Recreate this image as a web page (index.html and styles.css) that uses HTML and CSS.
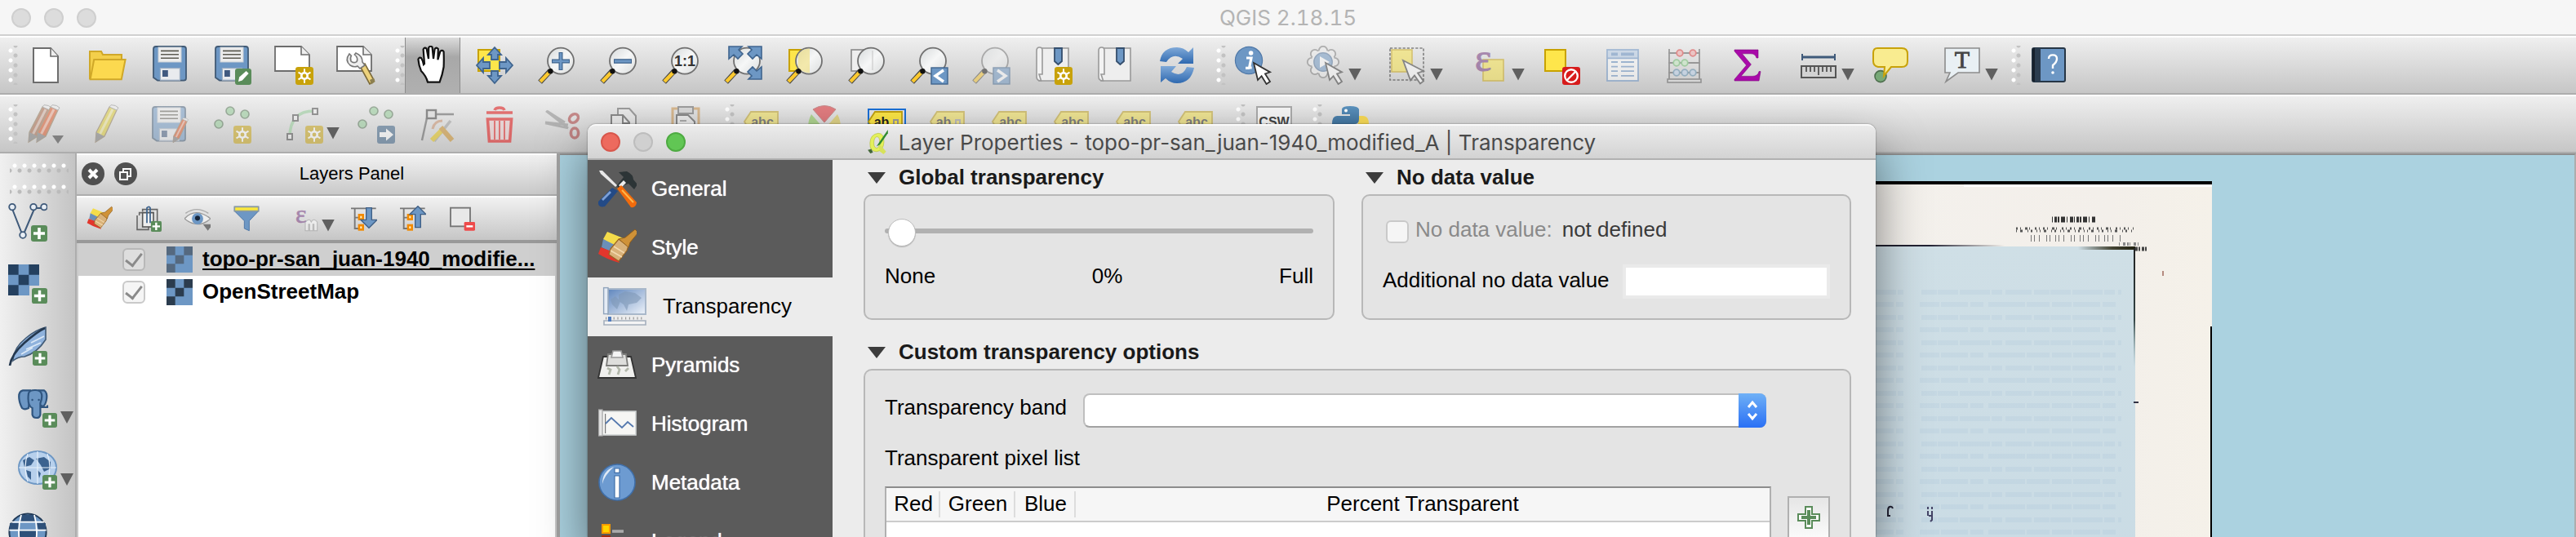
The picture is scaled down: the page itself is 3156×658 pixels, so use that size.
FILE: index.html
```html
<!DOCTYPE html>
<html lang="en">
<head>
<meta charset="utf-8">
<title>QGIS 2.18.15</title>
<link rel="stylesheet" href="styles.css">
</head>
<body>
<svg class="sprite" aria-hidden="true">
  <defs>
    <linearGradient id="g-glass" x1="0" y1="0" x2="1" y2="1"><stop offset="0" stop-color="#d5d9da"/><stop offset=".5" stop-color="#f6f7f7"/><stop offset="1" stop-color="#dadcdc"/></linearGradient>
    <linearGradient id="g-refresh" x1="0" y1="0" x2="0" y2="1"><stop offset="0" stop-color="#7fa9d8"/><stop offset="1" stop-color="#2f69b0"/></linearGradient>
    <linearGradient id="g-sea" x1="0" y1="0" x2="1" y2="1"><stop offset="0" stop-color="#5f86bd"/><stop offset="1" stop-color="#eef3fa"/></linearGradient>
    <linearGradient id="g-py" x1="0" y1="0" x2="0" y2="1"><stop offset="0" stop-color="#5c93bf"/><stop offset="1" stop-color="#356690"/></linearGradient>
  </defs>
  <symbol id="b-new" viewBox="0 0 10 10"><rect width="10" height="10" rx="1.5" fill="#c8a20a"/><path d="M5 1v8M1.6 3l6.8 4M8.4 3L1.6 7" stroke="#fff" stroke-width=".9"/><circle cx="5" cy="5" r="2.3" fill="#fff"/><circle cx="5" cy="5" r="1.1" fill="#c8a20a"/></symbol>
  <symbol id="b-plus" viewBox="0 0 10 10"><rect width="10" height="10" rx="1.5" fill="#5a8c5a"/><path d="M5 1.5v7M1.5 5h7" stroke="#fff" stroke-width="1.8"/></symbol>
  <symbol id="i-new" viewBox="0 0 24 24"><path d="M4.5 1.5h10.500l4.500 5v16H4.500z" fill="#fff" stroke="#6d6d6d"/><path d="M15 1.500v5h4.500" fill="#eee" stroke="#6d6d6d" stroke-width=".8"/></symbol>
  <symbol id="i-open" viewBox="0 0 24 24"><path d="M1 20.500V3.500h7l1 2h11.500V10" fill="#f3cf4b" stroke="#d0a828"/><path d="M1.300 20.600L3.600 8.500h19.200L20.400 20.600z" fill="#fcd94f" stroke="#d0a828"/></symbol>
  <symbol id="i-save" viewBox="0 0 24 24"><path d="M3.500.5h17q1.500 0 1.500 1.500v18q0 1.300-1.500 1.300h-16L2 19.500V2Q2 .5 3.500.5z" fill="#6d97c4" stroke="#415a75" stroke-width=".9"/><rect x="5" y="1" width="14" height="9" fill="#ededed" stroke="#c9cfd5" stroke-width=".5"/><path d="M6.500 3.200h11M6.500 5.400h11M6.500 7.600h11" stroke="#5c5b52" stroke-width=".8"/><rect x="6.200" y="13.800" width="12" height="7.300" fill="#e9ebee" stroke="#9fb0c4" stroke-width=".6"/><rect x="7.500" y="15" width="3.400" height="4" fill="#415a80"/></symbol>
  <symbol id="i-saveas" viewBox="0 0 24 24"><use href="#i-save"/><rect x="14" y="14" width="10" height="10" rx="1.500" fill="#5a8c5a"/><path d="M16 22l.6-2.700 4.200-3.800 1.500 1.500-3.900 4.200z" fill="#fff"/></symbol>
  <symbol id="i-comp" viewBox="0 0 24 24"><path d="M.5.500h16l5 5v10H.5z" fill="#fff" stroke="#6d6d6d" stroke-width=".9"/><path d="M16.500.5v5h5" fill="#eee" stroke="#6d6d6d" stroke-width=".8"/></symbol>
  <symbol id="i-compnew" viewBox="0 0 24 24"><use href="#i-comp"/><use href="#b-new" x="13" y="13" width="11" height="11"/></symbol>
  <symbol id="i-compman" viewBox="0 0 24 24"><use href="#i-comp"/><path d="M14.500 12.500l3-1.500 5.500 10-2.500 2.500z" fill="#edd27c" stroke="#7b6a3a" stroke-width=".8"/><path d="M20.500 21l2.500-1.300.8 2.300-2.300 1.700z" fill="#8d8050"/><path d="M8 5q-3 4 .5 7 2.500 1.500 4.500.5l1.500 1.500 3-2-1.500-2q0-4-4-5.500l-.8 1q2.500 2 1.300 4.300-2 1.200-3.500-.3-.7-2 .2-3.300z" fill="#eee" stroke="#777" stroke-width=".8"/></symbol>
  <symbol id="i-pan" viewBox="0 0 24 24"><path d="M9 22.300Q8 18.500 5 15.500 3.500 12 3.200 8.300q.6-1.500 1.800-.8Q6 9 6.500 11.500L7 11Q6.600 6 6.300 2.200q.8-1.600 2-.4L9.500 8 9.600 1.200q1-1.500 2.200-.3L12.500 8l.8-6q1-1.300 2.100 0L15.200 8.600l1.500-5.200q1.300-1 2.100.3Q19 9 18.800 13 18 18 16.300 22.300z" fill="#fff" stroke="#111" stroke-width="1.100"/></symbol>
  <symbol id="i-pansel" viewBox="0 0 24 24"><rect x="2" y="2.500" width="13" height="13" fill="#fee64b" stroke="#c8a200"/><path d="M12 1l4 4.500h-2V8.500h-4V5.500H8zM12 23l4-4.500h-2v-3h-4v3H8zM1 12l4-4.500v2.500h4v4H5v2.500zM23 12l-4-4.500v2.500h-4v4h4v2.500z" fill="#6d97c4" stroke="#3f648e" stroke-width=".9"/></symbol>
  <symbol id="i-lens" viewBox="0 0 24 24"><path d="M8 15.500L1.800 22.300" stroke="#444" stroke-width="3.200"/><path d="M7.500 16.200L2 22" stroke="#fcc92f" stroke-width="2.200"/><circle cx="14.500" cy="9.300" r="8" fill="url(#g-glass)" stroke="#707070" stroke-width=".9"/><circle cx="8.200" cy="15.600" r="1.600" fill="#111"/></symbol>
  <symbol id="i-zin" viewBox="0 0 24 24"><use href="#i-lens"/><path d="M14.500 4v11M9 9.500h11" stroke="#3f648e" stroke-width="2.500"/><path d="M14.500 4.500v10M9.500 9.500h10" stroke="#6d97c4" stroke-width="1.300"/></symbol>
  <symbol id="i-zout" viewBox="0 0 24 24"><use href="#i-lens"/><path d="M9 9.500h11" stroke="#3f648e" stroke-width="2.800"/><path d="M9.500 9.500h10" stroke="#6d97c4" stroke-width="1.500"/></symbol>
  <symbol id="i-zfull" viewBox="0 0 24 24"><use href="#i-lens"/><path d="M3.500.5h8l-2 2 2.500 2.500-3 3-2.500-2.500-3 2.500zM23.500.5h-8l2 2-2.500 2.500 3 3 2.500-2.500 3 2.500zM23.500 20.500h-8l2-2-2.500-2.500 3-3 2.500 2.500 3-2.500z" fill="#6d97c4" stroke="#3f648e" stroke-width=".8"/></symbol>
  <symbol id="i-zsel" viewBox="0 0 24 24"><rect x="2.500" y="2.500" width="12" height="13" fill="#fee64b" stroke="#c8a200"/><use href="#i-lens"/><path d="M8 5q3-3.500 7-3.300V16.700Q10 16.500 7.800 13z" fill="#f2e07a" opacity=".6"/></symbol>
  <symbol id="i-zlay" viewBox="0 0 24 24"><rect x="2.500" y="2.500" width="12" height="13" fill="#eee" stroke="#888" stroke-width=".8"/><use href="#i-lens"/><path d="M15.500 3v12" stroke="#ccc" stroke-width=".6"/></symbol>
  <symbol id="i-zlast" viewBox="0 0 24 24"><use href="#i-lens"/><rect x="13.500" y="13.500" width="10" height="10" fill="#6d97c4" stroke="#3f648e" stroke-width=".7"/><path d="M21 15l-5 3.500 5 3.500" fill="none" stroke="#fff" stroke-width="1.700"/></symbol>
  <symbol id="i-znext" viewBox="0 0 24 24"><use href="#i-lens"/><rect x="13.500" y="13.500" width="10" height="10" fill="#6d97c4" stroke="#3f648e" stroke-width=".7"/><path d="M16 15l5 3.500-5 3.500" fill="none" stroke="#fff" stroke-width="1.700"/></symbol>
  <symbol id="i-book" viewBox="0 0 24 24"><path d="M5 1.500h16.500v20H3.500V17.500" fill="#eeeeee" stroke="#999" stroke-width=".8"/><path d="M2 3q0-2 1.800-2T5.500 3v14.500H3.500l1.300 4Q2 21.500 2 19z" fill="#f3f3f3" stroke="#999" stroke-width=".8"/><path d="M13 1.500h4.500v8L15.200 11.500 13 9.500z" fill="#6d97c4" stroke="#344e6d" stroke-width=".9"/></symbol>
  <symbol id="i-booknew" viewBox="0 0 24 24"><use href="#i-book"/><use href="#b-new" x="13" y="13" width="11" height="11"/></symbol>
  <symbol id="i-refresh" viewBox="0 0 24 24"><path d="M1.500 9.500Q3 1 12 1q4 0 7 3l3-3v10h-9.500l3-3Q9.500 4 5.500 10z" fill="url(#g-refresh)"/><path d="M22.500 13.500Q20.500 23 12 23q-4 0-7-3l-3 2.500V12.500h9.500l-3 3.500Q15 20 18 13z" fill="url(#g-refresh)"/></symbol>
  <symbol id="cursor" viewBox="0 0 24 24"><path d="M12 10.500l10 5.700-3 1 3 4.800-2.200 1.500-3-4.900-2.300 2.400z" fill="#fff" stroke="#333" stroke-width=".9"/></symbol>
  <symbol id="i-ident" viewBox="0 0 24 24"><circle cx="9" cy="9" r="8.300" fill="#6d97c4" stroke="#4f78a8" stroke-width=".6"/><circle cx="10.300" cy="4.500" r="1.400" fill="#fff"/><path d="M7.500 7.500h3l-1.200 6h1.500M7 13.700h2.500" stroke="#fff" stroke-width="1.600" fill="none"/><use href="#cursor"/></symbol>
  <symbol id="i-action" viewBox="0 0 24 24"><g fill="#eee" stroke="#777" stroke-width=".9"><circle cx="10.500" cy="3" r="2.600"/><circle cx="15.500" cy="5" r="2.600"/><circle cx="17.500" cy="10" r="2.600"/><circle cx="15.500" cy="15" r="2.600"/><circle cx="10.500" cy="17" r="2.600"/><circle cx="5.500" cy="15" r="2.600"/><circle cx="3.500" cy="10" r="2.600"/><circle cx="5.500" cy="5" r="2.600"/></g><circle cx="10.500" cy="10" r="7.200" fill="#eee"/><circle cx="10.500" cy="10" r="5.600" fill="#6d97c4" stroke="#4b6e99" stroke-width=".7"/><path d="M8.500 6.500l6 3.500-6 3.500z" fill="#fff"/><use href="#cursor"/></symbol>
  <symbol id="i-select" viewBox="0 0 24 24"><rect x="1.500" y="1.500" width="20.500" height="19.500" fill="none" stroke="#222" stroke-width=".8" stroke-dasharray="1.600 1"/><rect x="2.500" y="2.500" width="12.500" height="13.500" fill="#fae445" stroke="#c8a200" stroke-width=".8"/><path d="M9.500 9l12.500 6.500-3.500 1.200 3.500 5-2 1.500-3.500-5-2.500 3z" fill="#fff" stroke="#333" stroke-width=".9"/></symbol>
  <symbol id="i-expr" viewBox="0 0 24 24"><rect x="8.500" y="8.500" width="12.500" height="13" fill="#fae445" stroke="#c8a200" stroke-width=".8"/></symbol>
  <symbol id="i-desel" viewBox="0 0 24 24"><rect x="2.500" y="2.500" width="12.500" height="13" fill="#fee64b" stroke="#c8a200"/><rect x="13" y="13" width="11" height="11" rx="1.500" fill="#d71b1b"/><circle cx="18.500" cy="18.500" r="3.900" fill="none" stroke="#fff" stroke-width="1.200"/><path d="M16 21l5-5" stroke="#fff" stroke-width="1.200"/></symbol>
  <symbol id="i-table" viewBox="0 0 24 24"><rect x="2.500" y="2.500" width="19" height="19" fill="#fff" stroke="#5f8cc2" stroke-width=".9"/><rect x="3" y="3" width="18" height="5" fill="#b5cde8"/><path d="M2.500 7.700h19" stroke="#5f8cc2" stroke-width=".8"/><path d="M5 5.200h4M11 5.200h8" stroke="#5f8cc2" stroke-width="1.900"/><path d="M5 10h4M11 10h8M5 12.800h4M11 12.800h8M5 15.600h4M11 15.600h8M5 18.400h4M11 18.400h8" stroke="#5f8cc2" stroke-width=".9"/></symbol>
  <symbol id="i-abacus" viewBox="0 0 24 24"><path d="M2.500 2v18.500M21 2v18.500M2 4.500h19.500M2 10.500h19.500M2 16.500h19.500" stroke="#555" stroke-width=".9"/><rect x="1.500" y="20.500" width="20.500" height="2" fill="#ddd" stroke="#555" stroke-width=".8"/><g fill="#f3a8a8" stroke="#d33" stroke-width=".9"><circle cx="9" cy="4.500" r="1.900"/><circle cx="17" cy="4.500" r="1.900"/></g><g fill="#c5ecc0" stroke="#6b6" stroke-width=".9"><circle cx="7" cy="10.500" r="1.900"/><circle cx="12" cy="10.500" r="1.900"/></g><g fill="#b9d0ea" stroke="#58a" stroke-width=".9"><circle cx="7" cy="16.500" r="1.900"/><circle cx="12" cy="16.500" r="1.900"/><circle cx="17" cy="16.500" r="1.900"/></g></symbol>
  <symbol id="i-sigma" viewBox="0 0 24 24"><path d="M4.500 2.500H19v5h-1q-.7-2.600-3.500-2.600H9.200l5.500 6.600-6.200 7.200h7q3.500 0 4-2.900h1l-1 5.700h-15v-.9l7.300-8.600-7.300-8.600z" fill="#a90aa9" stroke="#7d067d" stroke-width=".3"/></symbol>
  <symbol id="i-ruler" viewBox="0 0 24 24"><path d="M2 7h20" stroke="#3f5a7a" stroke-width="1.600"/><path d="M2 5v4M22 5v4" stroke="#3f5a7a"/><rect x="1.500" y="12.500" width="21" height="7" fill="#d2d2d2" stroke="#555"/><path d="M4.500 13v3M7 13v3M9.500 13v3M12 13v5M14.500 13v3M17 13v3M19.500 13v3" stroke="#444" stroke-width=".8"/></symbol>
  <symbol id="i-tips" viewBox="0 0 24 24"><circle cx="6" cy="18.800" r="3.500" fill="#77a877" stroke="#4e6e4e" stroke-width=".8"/><path d="M4 1.500h15q3.500 0 3.500 3.500v4.500q0 3.500-3.500 3.500h-6.500L8 18.500l.5-5.500H4.500Q1.500 12.500 1.500 9.500V4.500q0-3 2.500-3z" fill="#f9ec90" stroke="#c8a20a"/></symbol>
  <symbol id="i-annot" viewBox="0 0 24 24"><path d="M1.500 1.500h21v15H9.500L2 22l2.500-5.500h-3z" fill="#e9f0f4" stroke="#8c8c8c" stroke-width=".8"/></symbol>
  <symbol id="i-help" viewBox="0 0 24 24"><rect x="2" y="1.500" width="20" height="20.500" rx="1" fill="#6d97c4" stroke="#263646"/><path d="M2 1.500h5V22H2z" fill="#2b3c4e"/><path d="M2 1.500h1.500V22H2z" fill="#17212c"/><path d="M12 8q0-2.300 2.500-2.300T17 8q0 2-2.500 4v2" fill="none" stroke="#fff" stroke-width="1.200"/><circle cx="14.500" cy="16.500" r=".9" fill="#fff"/></symbol>
  <symbol id="pencil" viewBox="0 0 24 24"><path d="M5 17L13 1.500q3.200-.5 4.500 2L10 19.500 4.500 23z" fill="currentColor" stroke="#8a7350" stroke-width=".6"/><path d="M7.300 18L15 3" stroke="#fff" stroke-opacity=".5" stroke-width="1.500"/><path d="M5 17l5 2.500L4.500 23z" fill="#777"/><path d="M13 1.500l1-1.200q3 0 4.500 1.700l-1 1.500z" fill="#eee" stroke="#888" stroke-width=".5"/></symbol>
  <symbol id="i-edits" viewBox="0 0 24 24"><use href="#pencil" x="-3" class="c-brown"/><use href="#pencil" x="2" class="c-red"/><path d="M16 19h7l-3.500 5z" fill="#333"/></symbol>
  <symbol id="i-edit" viewBox="0 0 24 24"><use href="#pencil" class="c-yellow"/></symbol>
  <symbol id="i-saveedit" viewBox="0 0 24 24"><use href="#i-save" x="-.5" y="1"/><use href="#pencil" x="11" y="8" width="16" height="16" class="c-red"/></symbol>
  <symbol id="dots" viewBox="0 0 24 24"><g fill="#8fcb93" stroke="#4e6e4e" stroke-width=".8"><circle cx="11" cy="4" r="2.500"/><circle cx="20" cy="6" r="2.500"/><circle cx="4" cy="12" r="2.500"/></g></symbol>
  <symbol id="i-addf" viewBox="0 0 24 24"><use href="#dots"/><use href="#b-new" x="13" y="13" width="11" height="11"/></symbol>
  <symbol id="i-movef" viewBox="0 0 24 24"><use href="#dots"/><rect x="13" y="13" width="11" height="11" rx="1.500" fill="#335a80"/><path d="M14.500 17h4v-2.200l4.500 3.700-4.500 3.700V20h-4z" fill="#fff"/></symbol>
  <symbol id="i-curve" viewBox="0 0 24 24"><path d="M3.500 20q0-16 15-16" fill="none" stroke="#8fcb93" stroke-width="1.800"/><g fill="#eee" stroke="#444"><rect x="2" y="18" width="3" height="3.500"/><rect x="5.500" y="6.500" width="3" height="3.500"/><rect x="17.500" y="2.500" width="3" height="3.500"/></g><use href="#b-new" x="13" y="13" width="11" height="11"/></symbol>
  <symbol id="i-node" viewBox="0 0 24 24"><path d="M6 6h16M6 6L2.500 22" stroke="#555" stroke-width="1.200"/><rect x="5.500" y="3.500" width="5.500" height="5" fill="#ddd" stroke="#333" stroke-width="1.200"/><path d="M10 22.500L20 10" stroke="#999" stroke-width="1.800"/><path d="M8.500 22l6-6" stroke="#e3c100" stroke-width="3"/><path d="M14 14l7 8" stroke="#c88718" stroke-width="3"/><path d="M9 15q1-5 6-5" fill="none" stroke="#c88b65" stroke-width="1.500"/></symbol>
  <symbol id="i-trash" viewBox="0 0 24 24"><path d="M4 5h16M9 3.500q.5-1.500 3-1.500t3 1.500" stroke="#e00000" stroke-width="1.800" fill="none"/><path d="M4.700 9h14.600l-1 13.500H5.700z" fill="#eecccc" stroke="#e00000" stroke-width="1.800"/><path d="M9 10v11.500M12 10v11.500M15 10v11.500" stroke="#e00000" stroke-width=".9"/></symbol>
  <symbol id="i-cut" viewBox="0 0 24 24"><path d="M2.500 4L16 14.500M2 11l14 1.500M3 4l11 7M2 11.500l14 3" stroke="#888" stroke-width="1.400"/><g fill="none" stroke="#a33" stroke-width="1.800"><ellipse cx="19.500" cy="8.500" rx="3" ry="2.300" transform="rotate(-40 19.500 8.500)"/><ellipse cx="20" cy="17.500" rx="2.300" ry="3"/></g></symbol>
  <symbol id="i-copy" viewBox="0 0 24 24"><path d="M8.500 2.500h7l4 4.500v9h-11z" fill="#eee" stroke="#555"/><path d="M4.500 6.500h7l4 4.500v11h-11z" fill="#f4f4f4" stroke="#333"/><path d="M11.500 6.500v5h4" fill="none" stroke="#333"/></symbol>
  <symbol id="i-paste" viewBox="0 0 24 24"><rect x="4" y="2.500" width="16" height="19" fill="#ddd" stroke="#c98a3a" stroke-width="1.500"/><rect x="7.500" y="1.500" width="9" height="4" fill="#ccc" stroke="#555"/><path d="M6.500 6.500h7l4 4v10h-11z" fill="#f4f4f4" stroke="#333"/><path d="M8.500 10h4M8.500 12.500h7" stroke="#777"/></symbol>
  <symbol id="tag" viewBox="0 0 24 24"><path d="M5 4.500h16.500v13H5L1 10.500z" fill="#fae445" stroke="#c0a010" stroke-width=".9"/></symbol>
  <symbol id="pin" viewBox="0 0 24 24"><path d="M16.500 13V9.500h2.500V13" fill="none" stroke="#999"/></symbol>
  <symbol id="frame" viewBox="0 0 24 24"><rect x="1" y="3" width="22.500" height="20" fill="none" stroke="#1a6fd6" stroke-width="1"/></symbol>
  <symbol id="i-pie" viewBox="0 0 24 24"><path d="M12 11L5 3q7-4.500 14 0z" fill="#e0171e" stroke="#a33" stroke-width=".5"/><path d="M4 6l7 8v8Q-2 18 4 6z" fill="#7fc842"/><path d="M20 6l-7 8v8Q26 18 20 6z" fill="#dcc531"/></symbol>
  <symbol id="i-csw" viewBox="0 0 24 24"><rect x="2" y="1.500" width="21" height="21" fill="#f6f6f6" stroke="#aaa"/></symbol>
  <symbol id="i-python" viewBox="0 0 24 24"><path d="M17 7h3q3.500 0 3.500 5T20 18h-3v4H9v-7h6q2.500-1 2-8z" fill="#f8da56"/><path d="M7 5V3q0-2 5-2t5.500 2v6q0 3-3 3H8.500Q6 12.500 6 17H4Q1 17 1 12t3-5h8V6H7z" fill="url(#g-py)"/><circle cx="9.500" cy="3.700" r="1" fill="#fff"/></symbol>

  <symbol id="s-vector" viewBox="0 0 24 24"><path d="M2.500 4L9 20.500 16 4M16 3.500h6" fill="none" stroke="#3f5a7a" stroke-width="1"/><g fill="#e8eef5" stroke="#3f5a7a" stroke-width=".9"><circle cx="2.500" cy="2.800" r="1.900"/><circle cx="9" cy="20" r="1.900"/><circle cx="15.500" cy="2.800" r="1.900"/><circle cx="22" cy="2.800" r="1.900"/></g><use href="#b-plus" x="14" y="14" width="10" height="10"/></symbol>
  <symbol id="checker" viewBox="0 0 6 6"><path d="M0 0h6v6H0z" fill="#6d97c4"/><path d="M0 0h2v2H0zM4 0h2v2H4zM2 2h2v2H2zM0 4h2v2H0z" fill="currentColor"/></symbol>
  <symbol id="s-raster" viewBox="0 0 24 24"><use href="#checker" width="19" height="19" class="c-navy"/><path d="M13 13h6v6h-6z" fill="#d8d8d8"/><use href="#b-plus" x="14.500" y="14.500" width="9.500" height="9.500"/></symbol>
  <symbol id="s-feather" viewBox="0 0 24 24"><path d="M3 20Q3.500 13 11 7 17 2 23 .500V8Q18 16 10 18.500 6 18.500 3 21z" fill="#8fb2dc" stroke="#415a75" stroke-width=".8"/><path d="M1 24Q2 17 10 10T22.500 1" fill="none" stroke="#24384f" stroke-width="1.300"/><path d="M8 17l7-4M11 14l9-4M14 10l8-4" stroke="#dbe8f6" stroke-width=".9"/><use href="#b-plus" x="15" y="15" width="9" height="9"/></symbol>
  <symbol id="s-eleph" viewBox="0 0 24 24"><g fill="#6d97c4" stroke="#2f557f" stroke-width="1.100"><path d="M13 1.200h3Q18 2.500 17.600 6T15.500 11l-3-1z"/><path d="M14 11.500h4v-1.200" fill="none"/><path d="M7.500 1.200H3Q.6 1.700.6 5T2.500 12q1.700 1.300 4 0z"/><path d="M6.500 3Q7 1 10.500 1T14.500 3.500 13.700 9v7q-.3 2-2.400 2T8.800 16v-4Q5.500 10.500 6.500 3z"/></g><circle cx="8.800" cy="7" r=".6" fill="#2f557f"/><circle cx="12.800" cy="7" r=".6" fill="#2f557f"/><use href="#b-plus" x="15" y="15" width="9" height="9"/></symbol>
  <symbol id="s-wms" viewBox="0 0 24 24"><ellipse cx="12" cy="10.500" rx="11.500" ry="10" fill="#b7d0ec" stroke="#6d97c4"/><path d="M3 6l4-2 3 2-2 3-4 1zM11 5l5-1 4 3v4l-4 2-2-4zM5 12l3 1v5l-2-2zM12 12l2 2-1 3z" fill="#3b628f"/><path d="M.5 10.500h23M6 2q-3 8 0 17M12 .5v20M18 2q3 8 0 17" stroke="#e7f0fa" stroke-width=".6" fill="none"/><use href="#b-plus" x="15" y="15" width="9" height="9"/></symbol>
  <symbol id="s-wcs" viewBox="0 0 24 24"><circle cx="12" cy="12" r="11.300" fill="#6d97c4" stroke="#223b58"/><path d="M1 6.500h6l-1 4H.8zM17.500 6.500H23v4h-4.500zM8 1.500h8l1 4H7.500zM7 11h10v5H7z" fill="#2e5079"/><path d="M2 5.800h20M.7 10.800h22.600M2 17h20M8 1.500q-3 10 0 21M16 1.500q3 10 0 21" stroke="#fff" stroke-width=".9" fill="none"/></symbol>

  <symbol id="i-brush" viewBox="0 0 24 24"><path d="M6 2.500l10 4-4 6L3.500 7z" fill="#f4dc4a"/><path d="M3.500 7l9 4.500-3 4-7-3.500z" fill="#6b8fb8"/><path d="M2 12l8 3 3.500 6.500Q6 19.500 .5 16z" fill="#e2362c"/><path d="M8 13l5-6 6 4-1 3-5 6.500-6-4z" fill="#d9b27a" stroke="#9b6520" stroke-width=".6"/><path d="M13 7l6 5 1-3 5-6-2-2-6 5z" fill="#cf9238" stroke="#8d5c1c" stroke-width=".5"/><path d="M8 14l7 4M10 11.500l6.500 4" stroke="#f3d9ae" stroke-width=".8"/></symbol>
  <symbol id="l-group" viewBox="0 0 24 24"><path d="M6.500 5.500V3.500H20V16M3.500 9V6.500H17M1.500 9v13H12V19" fill="none" stroke="#666" stroke-width="1.200"/><rect x="6.500" y="6.500" width="10" height="13" fill="#eee" stroke="#555" stroke-width="1.200"/><path d="M10.500 16V2q2-2 3 0v14" fill="none" stroke="#3f648e" stroke-width="1.300"/><use href="#b-plus" x="14" y="14" width="10" height="10"/></symbol>
  <symbol id="l-eye" viewBox="0 0 24 24"><path d="M0 12Q10 1 24 12 12 22 0 12z" fill="#eee" stroke="#999"/><path d="M1 7q10-7 21 0" stroke="#aaa" fill="none"/><circle cx="12" cy="12" r="5.200" fill="#6d97c4"/><circle cx="12" cy="11.500" r="2.300" fill="#16253a"/><path d="M17 17h9l-4.500 6z" fill="#777"/></symbol>
  <symbol id="l-filter" viewBox="0 0 24 24"><path d="M1 1h22v4l-8.500 9v9L10 21v-7L1 5z" fill="#6d97c4" stroke="#4b74a4" stroke-width=".7"/><path d="M1 1h22v4H1z" fill="#fbe83c" stroke="#8a9aa0" stroke-width="1.200"/></symbol>
  <symbol id="l-eps" viewBox="0 0 24 24"><path d="M12 23v-8q4-4 5.500 0 2-4 5.500 0v8h-3v-6h-1v6h-3v-6h-1v6z" fill="#fff" stroke="#999" stroke-width=".8"/></symbol>
  <symbol id="l-tree" viewBox="0 0 24 24"><path d="M0 2.500h23M3.500 2.500V21H10M3.500 11H8" fill="none" stroke="#777" stroke-width="1.400"/><g fill="#fff1c8" stroke="#f28a00" stroke-width="2"><rect x="7.500" y="8.500" width="3.500" height="4"/><rect x="7.500" y="18" width="3.500" height="4"/></g></symbol>
  <symbol id="l-expand" viewBox="0 0 24 24"><use href="#l-tree"/><path d="M14 2h5v11h5L16.500 20.500 9 13h5z" fill="#6d97c4" stroke="#3f5f86"/></symbol>
  <symbol id="l-collapse" viewBox="0 0 24 24"><use href="#l-tree"/><path d="M14 20h5V8h5L16.500.500 9 8h5z" fill="#6d97c4" stroke="#3f5f86"/></symbol>
  <symbol id="l-remove" viewBox="0 0 24 24"><rect x="1.500" y="2" width="18" height="17" fill="#e8e8e8" stroke="#777" stroke-width="1.400"/><rect x="14" y="15" width="10" height="8" rx="1" fill="#ee4b4b"/><path d="M16 19h6" stroke="#fff" stroke-width="1.800"/></symbol>

  <symbol id="p-general" viewBox="0 0 24 24"><path d="M1 1l2 0 9 9-1 1-9-8z" fill="#e8e8e8"/><path d="M12 10l4-5-3-3 5-.5q4 2 4 5l2.500 3-2 3L19 9l-3 1-3 3z" fill="#2c3436"/><path d="M13 10l3-3 1.500 1.500-3 3z" fill="#eee"/><path d="M9 11.500l3.500 2-8 9.500Q0 24 .5 20z" fill="#234a86"/><path d="M3 19l5-5" stroke="#7da0d6" stroke-width="1.400"/><path d="M12 12l2.500-2 9.500 10.500q-.5 3.500-3.500 3z" fill="#f26b0c"/><path d="M15 13l7 7.500" stroke="#ffb74a" stroke-width="1"/></symbol>
  <symbol id="p-transp" viewBox="0 0 27 24"><rect x="3.500" y="1.500" width="23" height="15.500" fill="url(#g-sea)" stroke="#a9b8ca"/><rect x=".8" y=".8" width="2.700" height="16" fill="#e5ecf5" stroke="#8fa3bb" stroke-width=".7"/><path d="M5 8l3-2 3 3-2 5-3-3zM10 5l4-2 6 1 4 3-3 3-5 1-1 4-2-4-3-2z" fill="#7f97b5" opacity=".6"/><path d="M1 21h25.500v2.500H1z" fill="#f4f4f4" stroke="#a5b0bd" stroke-width=".8"/><path d="M2 19.500h24" stroke="#999" stroke-width="1.500" stroke-dasharray=".6 1.800"/><path d="M3.500 18.500h2v3h-2z" fill="#4f7bbd"/></symbol>
  <symbol id="p-pyr" viewBox="0 0 24 24"><path d="M3.500 7h17l3 13H.5z" fill="#f0f0ee" stroke="#333" stroke-width=".9"/><path d="M6.500 5.500h11l1 7h-13z" fill="#dededc" stroke="#7c7c7a" stroke-width=".9"/><path d="M9.500 3.500h5l1 4H8.500z" fill="#f4f4f4" stroke="#999" stroke-width=".8"/><path d="M6 14l2 1-1 3M12 13l1.500 2-1 3M19 14l-2 2" stroke="#b3b8ab" stroke-width="1.400" fill="none"/></symbol>
  <symbol id="p-hist" viewBox="0 0 24 24"><rect x="3" y="4.500" width="20.500" height="14.500" fill="#f6f6f4" stroke="#cfd3d3" stroke-width=".8"/><rect x=".8" y="3.500" width="2.200" height="16" fill="#e5e5e5" stroke="#aaa" stroke-width=".6"/><path d="M4.800 6v12" stroke="#777" stroke-width=".6"/><path d="M5 12l3.500-3.500 6.500 6 3.500-3.500 3.500 3" fill="none" stroke="#5478ae" stroke-width=".9"/></symbol>
  <symbol id="p-meta" viewBox="0 0 24 24"><circle cx="12" cy="12" r="11" fill="#6d9bd1" stroke="#3f6ea8" stroke-width=".8"/><path d="M3 13Q3 5 10 2.500 4 8 3 13z" fill="#dfe9f5"/><path d="M10.500 3.500h3v2.700h-3zM10.500 8h3v13.500h-3z" fill="#fff" stroke="#3f6ea8" stroke-width=".6"/></symbol>
  <symbol id="p-legend" viewBox="0 0 24 24"><rect x="3" y="2" width="4.500" height="5" fill="#ffd400" stroke="#f59a00"/><path d="M9 6h7" stroke="#aaa" stroke-width="1.800"/><rect x="3" y="9" width="4.500" height="5" fill="#e05a30" stroke="#a02a10"/></symbol>
  <symbol id="q-logo" viewBox="0 0 24 28"><path d="M12 4Q3 5 2.500 15T10 25q8-1 8.500-11T12 4zm-1 4q3 1 2.500 7T10 21q-3.500-1-3-7t4-6z" fill="#e3f05a" fill-rule="evenodd" stroke="#aab82a" stroke-width=".5"/><path d="M12 18l3 0 6 7-3 3-4-3z" fill="#d7e25a"/><path d="M23 0L10 19l4-2 9-13z" fill="#2f8a2f"/><path d="M0 23l4-1 2 4-3 1z" fill="#44683a"/></symbol>
</svg>

<div class="app">
  <header class="titlebar">
    <div class="lights"><span class="light"></span><span class="light"></span><span class="light"></span></div>
    <h1 class="win-title">QGIS 2.18.15</h1>
  </header>

  <div class="toolbar" role="toolbar" aria-label="File and navigation">
    <span class="grip"></span>
    <button class="tb" aria-label="New project"><svg><use href="#i-new"/></svg></button>
    <button class="tb" aria-label="Open project"><svg><use href="#i-open"/></svg></button>
    <button class="tb" aria-label="Save project"><svg><use href="#i-save"/></svg></button>
    <button class="tb" aria-label="Save project as"><svg><use href="#i-saveas"/></svg></button>
    <button class="tb" aria-label="New print composer"><svg><use href="#i-compnew"/></svg></button>
    <button class="tb" aria-label="Composer manager"><svg><use href="#i-compman"/></svg></button>
    <span class="grip"></span>
    <button class="tb active" aria-label="Pan map" aria-pressed="true"><svg><use href="#i-pan"/></svg></button>
    <button class="tb" aria-label="Pan to selection"><svg><use href="#i-pansel"/></svg></button>
    <button class="tb" aria-label="Zoom in"><svg><use href="#i-zin"/></svg></button>
    <button class="tb" aria-label="Zoom out"><svg><use href="#i-zout"/></svg></button>
    <button class="tb" aria-label="Zoom to native resolution"><svg viewBox="0 0 24 24"><use href="#i-lens"/><text x="14.500" y="12.700" class="t-zoom">1:1</text></svg></button>
    <button class="tb" aria-label="Zoom full"><svg><use href="#i-zfull"/></svg></button>
    <button class="tb" aria-label="Zoom to selection"><svg><use href="#i-zsel"/></svg></button>
    <button class="tb" aria-label="Zoom to layer"><svg><use href="#i-zlay"/></svg></button>
    <button class="tb" aria-label="Zoom last"><svg><use href="#i-zlast"/></svg></button>
    <button class="tb" aria-label="Zoom next" disabled><svg><use href="#i-znext"/></svg></button>
    <button class="tb" aria-label="New bookmark"><svg><use href="#i-booknew"/></svg></button>
    <button class="tb" aria-label="Show bookmarks"><svg><use href="#i-book"/></svg></button>
    <button class="tb" aria-label="Refresh"><svg><use href="#i-refresh"/></svg></button>
    <span class="grip"></span>
    <button class="tb" aria-label="Identify features"><svg><use href="#i-ident"/></svg></button>
    <button class="tb menu dim" aria-label="Run feature action"><svg><use href="#i-action"/></svg><span class="arrow"></span></button>
    <button class="tb menu dim" aria-label="Select features"><svg><use href="#i-select"/></svg><span class="arrow"></span></button>
    <button class="tb menu dim" aria-label="Select by expression"><svg viewBox="0 0 24 24"><use href="#i-expr"/><text x="8.500" y="15.500" class="t-eps">ε</text></svg><span class="arrow"></span></button>
    <button class="tb" aria-label="Deselect all"><svg><use href="#i-desel"/></svg></button>
    <button class="tb" aria-label="Attribute table" disabled><svg><use href="#i-table"/></svg></button>
    <button class="tb" aria-label="Field calculator" disabled><svg><use href="#i-abacus"/></svg></button>
    <button class="tb" aria-label="Statistical summary"><svg><use href="#i-sigma"/></svg></button>
    <button class="tb menu" aria-label="Measure line"><svg><use href="#i-ruler"/></svg><span class="arrow"></span></button>
    <button class="tb" aria-label="Map tips"><svg><use href="#i-tips"/></svg></button>
    <button class="tb menu" aria-label="Text annotation"><svg viewBox="0 0 24 24"><use href="#i-annot"/><text x="12" y="13.600" class="t-annot">T</text></svg><span class="arrow"></span></button>
    <span class="grip"></span>
    <button class="tb" aria-label="Help"><svg><use href="#i-help"/></svg></button>
  </div>

  <div class="toolbar" role="toolbar" aria-label="Digitizing and labels">
    <span class="grip"></span>
    <button class="tb" aria-label="Current edits" disabled><svg><use href="#i-edits"/></svg></button>
    <button class="tb" aria-label="Toggle editing" disabled><svg><use href="#i-edit"/></svg></button>
    <button class="tb" aria-label="Save layer edits" disabled><svg><use href="#i-saveedit"/></svg></button>
    <button class="tb" aria-label="Add feature" disabled><svg><use href="#i-addf"/></svg></button>
    <button class="tb menu dim" aria-label="Add circular string"><svg><use href="#i-curve"/></svg><span class="arrow"></span></button>
    <button class="tb" aria-label="Move feature" disabled><svg><use href="#i-movef"/></svg></button>
    <button class="tb" aria-label="Node tool" disabled><svg><use href="#i-node"/></svg></button>
    <button class="tb" aria-label="Delete selected" disabled><svg><use href="#i-trash"/></svg></button>
    <button class="tb" aria-label="Cut features" disabled><svg><use href="#i-cut"/></svg></button>
    <button class="tb" aria-label="Copy features" disabled><svg><use href="#i-copy"/></svg></button>
    <button class="tb" aria-label="Paste features" disabled><svg><use href="#i-paste"/></svg></button>
    <span class="grip"></span>
    <button class="tb" aria-label="Labeling options" disabled><svg viewBox="0 0 24 24"><use href="#tag"/><text x="12" y="13.500" class="t-abc">abc</text></svg></button>
    <button class="tb" aria-label="Diagram options" disabled><svg><use href="#i-pie"/></svg></button>
    <button class="tb" aria-label="Highlight pinned labels"><svg viewBox="0 0 24 24"><use href="#frame"/><use href="#tag"/><text x="9" y="13.500" class="t-abc">ab</text><use href="#pin"/></svg></button>
    <button class="tb" aria-label="Pin labels" disabled><svg viewBox="0 0 24 24"><use href="#tag"/><text x="9" y="13.500" class="t-abc">ab</text><use href="#pin"/></svg></button>
    <button class="tb" aria-label="Show or hide labels" disabled><svg viewBox="0 0 24 24"><use href="#tag"/><text x="12" y="13.500" class="t-abc">abc</text></svg></button>
    <button class="tb" aria-label="Move label" disabled><svg viewBox="0 0 24 24"><use href="#tag"/><text x="12" y="13.500" class="t-abc">abc</text></svg></button>
    <button class="tb" aria-label="Rotate label" disabled><svg viewBox="0 0 24 24"><use href="#tag"/><text x="12" y="13.500" class="t-abc">abc</text></svg></button>
    <button class="tb" aria-label="Change label" disabled><svg viewBox="0 0 24 24"><use href="#tag"/><text x="12" y="13.500" class="t-abc">abc</text></svg></button>
    <span class="grip"></span>
    <button class="tb" aria-label="Metasearch"><svg viewBox="0 0 24 24"><use href="#i-csw"/><text x="12.500" y="13.500" class="t-csw">CSW</text></svg></button>
    <span class="grip"></span>
    <button class="tb" aria-label="Python console"><svg><use href="#i-python"/></svg></button>
  </div>

  <div class="workspace">
    <div class="side" role="toolbar" aria-label="Manage layers">
      <span class="grip-h"></span>
      <span class="grip-h"></span>
      <button class="sb" aria-label="Add vector layer"><svg><use href="#s-vector"/></svg></button>
      <button class="sb" aria-label="Add raster layer"><svg><use href="#s-raster"/></svg></button>
      <button class="sb" aria-label="Add SpatiaLite layer"><svg><use href="#s-feather"/></svg></button>
      <button class="sb menu" aria-label="Add PostGIS layer"><svg><use href="#s-eleph"/></svg><span class="arrow"></span></button>
      <button class="sb menu" aria-label="Add WMS layer"><svg><use href="#s-wms"/></svg><span class="arrow"></span></button>
      <button class="sb" aria-label="Add WCS layer"><svg><use href="#s-wcs"/></svg></button>
    </div>

    <section class="layers" aria-label="Layers Panel">
      <header class="layers-head">
        <button class="round" aria-label="Close panel"><svg viewBox="0 0 28 28"><path d="M9 9l10 10M19 9L9 19" stroke="#fff" stroke-width="4"/></svg></button>
        <button class="round" aria-label="Float panel"><svg viewBox="0 0 28 28"><rect x="11" y="8" width="9" height="9" fill="none" stroke="#fff" stroke-width="2"/><rect x="7" y="12" width="9" height="9" fill="#555" stroke="#fff" stroke-width="2"/></svg></button>
        <h2>Layers Panel</h2>
      </header>
      <div class="layers-tools" role="toolbar" aria-label="Layer tools">
        <button class="lb" aria-label="Open layer styling"><svg><use href="#i-brush"/></svg></button>
        <button class="lb" aria-label="Add group"><svg><use href="#l-group"/></svg></button>
        <button class="lb" aria-label="Manage visibility"><svg><use href="#l-eye"/></svg></button>
        <button class="lb" aria-label="Filter legend"><svg><use href="#l-filter"/></svg></button>
        <button class="lb menu dim" aria-label="Filter by expression"><svg viewBox="0 0 24 24"><use href="#l-eps"/><text x="8" y="16" class="t-eps">ε</text></svg><span class="arrow"></span></button>
        <button class="lb" aria-label="Expand all"><svg><use href="#l-expand"/></svg></button>
        <button class="lb" aria-label="Collapse all"><svg><use href="#l-collapse"/></svg></button>
        <button class="lb" aria-label="Remove layer"><svg><use href="#l-remove"/></svg></button>
      </div>
      <ul class="layer-list">
        <li class="layer selected"><input type="checkbox" class="check" id="ly1" checked><svg class="c-slate"><use href="#checker"/></svg><label for="ly1">topo-pr-san_juan-1940_modifie...</label></li>
        <li class="layer"><input type="checkbox" class="check" id="ly2" checked><svg class="c-ink"><use href="#checker"/></svg><label for="ly2">OpenStreetMap</label></li>
      </ul>
    </section>

    <main class="map">
      <svg class="map-canvas" role="img" aria-label="Map canvas">
        <defs>
          <pattern id="ghost" width="253" height="31" patternUnits="userSpaceOnUse" x="1666" y="160">
            <path d="M2 8h245" stroke="#9fbdd6" stroke-width="6" stroke-dasharray="19 1 25 2 37 2 13 4 32 3"/>
            <path d="M0 23h246" stroke="#9fbdd6" stroke-width="6" stroke-dasharray="24 2 33 3 16 6 45 2 28 3"/>
          </pattern>
          <linearGradient id="fade-r"><stop offset="0" stop-color="#111"/><stop offset=".75" stop-color="#223"/><stop offset="1" stop-color="#223" stop-opacity="0"/></linearGradient>
          <linearGradient id="fade-l"><stop offset="0" stop-color="#332" stop-opacity="0"/><stop offset=".6" stop-color="#443"/><stop offset="1" stop-color="#221"/></linearGradient>
          <linearGradient id="fade-d" x1="0" y1="0" x2="0" y2="1"><stop offset="0" stop-color="#222"/><stop offset=".6" stop-color="#344"/><stop offset="1" stop-color="#8aa" stop-opacity="0"/></linearGradient>
          <linearGradient id="paper"><stop offset="0" stop-color="#f4f2ee"/><stop offset=".8" stop-color="#f3efea"/><stop offset="1" stop-color="#f5f1e9"/></linearGradient>
          <linearGradient id="sea" x1="0" y1="0" x2="0" y2="1"><stop offset="0" stop-color="#cfdfe6"/><stop offset="1" stop-color="#c3d7e3"/></linearGradient>
        </defs>
        <rect x="1400" y="32" width="624" height="1000" fill="url(#paper)"/>
        <rect x="1400" y="32" width="624" height="4" fill="#000"/>
        <rect x="1720" y="36" width="304" height="3" fill="#fff"/>
        <rect x="2022" y="210" width="2" height="800" fill="#000"/>
        <rect x="1400" y="112" width="530" height="900" fill="url(#sea)"/>
        <rect x="1666" y="160" width="253" height="850" fill="url(#ghost)" opacity=".18"/>
        <rect x="1612" y="160" width="34" height="850" fill="url(#ghost)" opacity=".18"/>
        <rect x="1400" y="110" width="370" height="2" fill="url(#fade-r)"/>
        <rect x="1860" y="112" width="70" height="4" fill="url(#fade-l)"/>
        <path d="M1930 115h16" stroke="#444" stroke-width="5" stroke-dasharray="3 1 2 2"/>
        <rect x="1928" y="114" width="2" height="146" fill="url(#fade-d)"/>
        <rect x="1928" y="302" width="6" height="2" fill="#334"/>
        <g stroke="#555">
          <path d="M1828 79h54" stroke-width="7" stroke-dasharray="1 2 3 1 2 2 5 2 1 3 4 1" stroke="#333"/>
          <path d="M1784 90h144" stroke-width="3" stroke-dasharray="2 3 1 5 3 2 1 6 2 3 1 4"/>
          <path d="M1784 93h144" stroke-width="3" stroke-dasharray="1 4 3 6 1 3 2 5 1 3"/>
          <path d="M1802 102h112" stroke-width="8" stroke-dasharray="1 3 1 5 1 8 1 3 1 6" stroke="#777"/>
          <path d="M1910 109h24" stroke-width="4" stroke-dasharray="1 4 3 2 2 1" stroke="#888"/>
        </g>
        <path d="M1633 433q-1-3-4-2-2 1-2 5v6h3" fill="none" stroke="#223" stroke-width="2"/>
        <path d="M1676 431v3M1681 431v3M1676 436v6M1681 436v11l-2 2M1677 442h4" fill="none" stroke="#446" stroke-width="2"/>
        <rect x="1963" y="142" width="2" height="6" fill="#b58a80"/>
      </svg>
    </main>
  </div>
</div>

<section class="dialog" role="dialog" aria-labelledby="dlg-title">
  <header class="dlg-bar">
    <div class="lights"><button class="light red" aria-label="Close"></button><button class="light gray" aria-label="Minimize" disabled></button><button class="light green" aria-label="Zoom"></button></div>
    <div class="dlg-title"><svg><use href="#q-logo"/></svg><h2 id="dlg-title">Layer Properties - topo-pr-san_juan-1940_modified_A | Transparency</h2></div>
  </header>
  <div class="dlg-body">
    <nav class="pages" aria-label="Property pages">
      <button class="page"><svg><use href="#p-general"/></svg>General</button>
      <button class="page"><svg><use href="#i-brush"/></svg>Style</button>
      <button class="page current" aria-current="page"><svg><use href="#p-transp"/></svg>Transparency</button>
      <button class="page"><svg><use href="#p-pyr"/></svg>Pyramids</button>
      <button class="page"><svg><use href="#p-hist"/></svg>Histogram</button>
      <button class="page"><svg><use href="#p-meta"/></svg>Metadata</button>
      <button class="page"><svg><use href="#p-legend"/></svg>Legend</button>
    </nav>
    <div class="content">
      <section class="group">
        <h3><span class="tri"></span>Global transparency</h3>
        <div class="box">
          <input type="range" class="slider" min="0" max="100" value="0" aria-label="Global transparency">
          <div class="scale"><span>None</span><output>0%</output><span>Full</span></div>
        </div>
      </section>
      <section class="group">
        <h3><span class="tri"></span>No data value</h3>
        <div class="box">
          <div class="nodata"><input type="checkbox" class="check" id="nd" disabled><label for="nd">No data value:</label><span>not defined</span></div>
          <div class="extra"><label for="extra">Additional no data value</label><input type="text" id="extra"></div>
        </div>
      </section>
      <section class="group wide">
        <h3><span class="tri"></span>Custom transparency options</h3>
        <div class="box tall">
          <div class="band"><label for="band">Transparency band</label>
            <div class="combo"><select id="band"><option></option></select><span class="cap"><svg viewBox="0 0 34 42"><path d="M12 17l5-6 5 6M12 25l5 6 5-6" fill="none" stroke="#fff" stroke-width="3"/></svg></span></div>
          </div>
          <p class="caption" id="plist">Transparent pixel list</p>
          <div class="list-row">
            <table class="pixels" aria-labelledby="plist">
              <thead><tr><th class="w-red">Red</th><th class="w-green">Green</th><th class="w-blue">Blue</th><th>Percent Transparent</th></tr></thead>
              <tbody><tr><td colspan="4"></td></tr></tbody>
            </table>
            <button class="add" aria-label="Add values manually"><svg viewBox="0 0 30 28"><path d="M11 1h8v9h9v8h-9v9h-8v-9H2v-8h9z" fill="#fff" stroke="#5a8c5a" stroke-width="2"/><path d="M15 5v18M6 14h18" stroke="#5a8c5a" stroke-width="4"/></svg></button>
          </div>
        </div>
      </section>
    </div>
  </div>
</section>
</body>
</html>
```
FILE: styles.css
```css
* { box-sizing: border-box; }
body {
  margin: 0;
  height: 100vh;
  overflow: hidden;
  background: #abd2e0;
  font: 26px/32px "Liberation Sans", Arial, sans-serif;
  color: #000;
}
h1, h2, h3, p, ul { margin: 0; padding: 0; }
button { border: 0; padding: 0; background: none; font: inherit; color: inherit; }
svg { display: block; flex: none; overflow: visible; }
.sprite { position: absolute; width: 0; height: 0; }

.c-brown { color: #a5603f; }
.c-red { color: #d8501e; }
.c-yellow { color: #dccb2c; }
.c-navy { color: #24405f; }
.c-slate { color: #55697f; }
.c-ink { color: #2b3c4e; }
.t-zoom { font: bold 9px "Liberation Sans", sans-serif; text-anchor: middle; fill: #333; }
.t-eps { font: 24px "Liberation Serif", serif; text-anchor: middle; fill: #6d2f7a; stroke: #6d2f7a; stroke-width: .5px; }
.t-annot { font: 15px "Liberation Serif", serif; text-anchor: middle; fill: #444; stroke: #444; stroke-width: .4px; }
.t-abc { font: bold 8px "Liberation Sans", sans-serif; text-anchor: middle; fill: #222; }
.t-csw { font: bold 8px "Liberation Sans", sans-serif; text-anchor: middle; fill: #444; }

.app { display: flex; flex-direction: column; height: 100%; }
.titlebar {
  position: relative;
  flex: none;
  display: grid;
  place-items: center;
  height: 44px;
  background: #f6f6f6;
  border-bottom: 2px solid #d0d0d0;
}
.lights { position: absolute; left: 14px; top: 10px; display: flex; gap: 16px; }
.light { width: 24px; height: 24px; border-radius: 50%; background: #dcdcdc; border: 2px solid #cfcfcf; }
.win-title { font: 26px/32px Inter, sans-serif; font-variant-numeric: tabular-nums; color: #b4b4b4; padding-top: 2px; }

.toolbar {
  flex: none;
  display: flex;
  align-items: stretch;
  height: 72px;
  padding-left: 4px;
  background: linear-gradient(#efefef, #c6c6c6);
  border-top: 2px solid #fff;
  border-bottom: 2px solid #adadad;
}
.grip {
  flex: none;
  align-self: center;
  width: 12px;
  height: 48px;
  margin-left: 6px;
  background:
    radial-gradient(circle, #fff 2px, transparent 3px) 0 0 / 6px 12px repeat-y,
    radial-gradient(circle, #c2c2c2 2px, transparent 3px) 6px 6px / 6px 12px repeat-y;
}
.tb {
  flex: none;
  display: flex;
  align-items: center;
  width: 68px;
  padding: 0 10px;
  margin-right: 8px;
}
.tb svg { width: 48px; height: 48px; }
.tb.menu { width: 92px; padding-left: 22px; gap: 4px; }
.tb:disabled svg, .dim svg { opacity: .5; }
.tb.active { background: linear-gradient(#dcdcdc, #a8a8a8 35%, #b0b0b0); border: solid #8c8c8c; border-width: 0 1px; padding: 0 9px; }
.arrow { flex: none; width: 16px; height: 15px; background: #606060; clip-path: polygon(0 0, 100% 0, 50% 100%); }
.tb .arrow { margin-top: 22px; }

.workspace { flex: 1; display: flex; min-height: 0; }
.side {
  flex: none;
  display: flex;
  flex-direction: column;
  width: 94px;
  padding-top: 12px;
  background: linear-gradient(90deg, #f0f0f0, #c4c4c4);
  border-right: 2px solid #adadad;
}
.grip-h {
  flex: none;
  width: 72px;
  height: 12px;
  margin: 0 0 14px 12px;
  background:
    radial-gradient(circle, #fff 2px, transparent 3px) 0 0 / 12px 6px repeat-x,
    radial-gradient(circle, #bbb 2px, transparent 3px) 6px 6px / 12px 6px repeat-x;
}
.sb { flex: none; display: flex; gap: 4px; height: 76px; padding: 0 0 28px 10px; }
.grip-h + .sb { margin-top: -4px; }
.sb svg { width: 48px; height: 48px; }
.sb.menu { padding-left: 22px; }
.sb .arrow { margin-top: 28px; }

.layers {
  flex: none;
  display: flex;
  flex-direction: column;
  width: 592px;
  border-right: 4px solid #a2a2a2;
  background: #c8c8c8;
}
.layers-head {
  flex: none;
  display: flex;
  align-items: center;
  gap: 12px;
  height: 52px;
  padding: 0 0 2px 6px;
  background: linear-gradient(#f1f1f1, #c9c9c9);
  border-top: 2px solid #fff;
  border-bottom: 2px solid #adadad;
}
.layers-head h2 { flex: 1; font-size: 22px; font-weight: 400; text-align: center; }
.round { flex: none; width: 28px; height: 28px; border-radius: 50%; background: #505050; }
.layers-tools {
  flex: none;
  display: flex;
  align-items: center;
  gap: 4px;
  height: 58px;
  background: linear-gradient(#f1f1f1, #c6c6c6);
  border-top: 2px solid #fff;
  border-bottom: 4px solid #999;
}
.lb { flex: none; display: flex; align-items: center; width: 56px; padding: 0 12px; }
.lb svg { width: 32px; height: 32px; }
.lb.menu { width: 80px; padding: 0 0 0 24px; gap: 4px; }
.lb .arrow { margin-top: 16px; }
.layer-list { flex: 1; list-style: none; background: #fff; margin: 0 2px; }
.layer { display: flex; align-items: center; height: 40px; padding-left: 54px; font-weight: 700; }
.layer.selected { background: #cfcfcf; }
.layer svg { width: 32px; height: 32px; margin: 0 12px 0 26px; }
.layer label { padding-bottom: 2px; }
.selected label { text-decoration: underline 2px; text-underline-offset: 3px; text-decoration-skip-ink: none; }
.check {
  appearance: none;
  flex: none;
  display: grid;
  place-items: center;
  width: 28px;
  height: 28px;
  margin: 0;
  border: 2px solid #c9c9c9;
  border-radius: 6px;
  background: #f5f5f5;
}
.selected .check { background: #dedede; border-color: #b8b8b8; }
.check:checked::after {
  content: "";
  width: 9px;
  height: 17px;
  margin-top: -4px;
  border: solid #8a8a8a;
  border-width: 0 3px 3px 0;
  transform: rotate(38deg);
}

.map { flex: 1; min-width: 0; border-top: 2px solid #8f8f8f; border-right: 2px solid #adadad; background: #abd2e0; }
.map-canvas { width: 100%; height: 100%; overflow: hidden; }

.dialog {
  position: absolute;
  left: 720px;
  top: 152px;
  bottom: 0;
  width: 50%;
  display: flex;
  flex-direction: column;
  border-radius: 10px 10px 0 0;
  background: #ececec;
  box-shadow: 0 0 2px rgba(0, 0, 0, .5), 0 30px 60px rgba(0, 0, 0, .5);
}
.dlg-bar {
  position: relative;
  flex: none;
  display: grid;
  place-items: center;
  height: 44px;
  border-top: 2px solid #fafafa;
  border-bottom: 2px solid #b1b1b1;
  border-radius: 10px 10px 0 0;
  background: linear-gradient(#ebebeb, #d3d3d3);
}
.dlg-bar .lights { left: 16px; top: 8px; }
.red { background: #ed6a5e; border-color: #d8574c; }
.gray { background: #d0d0d0; border-color: #bdbdbd; }
.green { background: #61c654; border-color: #4eab42; }
.dlg-title { display: flex; align-items: center; gap: 12px; }
.dlg-title svg { width: 26px; height: 30px; }
.dlg-title h2 { font: 26px/32px Inter, sans-serif; color: #4a4a4a; padding-top: 2px; white-space: nowrap; }
.dlg-body { flex: 1; display: flex; min-height: 0; overflow: hidden; }
.pages { flex: none; width: 300px; background: #5b5b5b; }
.page { display: flex; align-items: center; gap: 18px; width: 100%; height: 72px; padding: 0 0 2px 12px; color: #fff; text-shadow: 0 0 1px #fff; }
.page svg { width: 48px; height: 48px; }
.page.current { gap: 20px; padding-left: 18px; background: #ececec; color: #000; text-shadow: none; }
.page.current svg { width: 54px; }

.content {
  flex: 1;
  display: grid;
  grid-template-columns: 577fr 600fr;
  grid-template-rows: auto 1fr;
  gap: 18px 33px;
  padding: 0 30px 0 38px;
}
.group { display: flex; flex-direction: column; }
.wide { grid-column: 1 / -1; }
.group h3 { display: flex; align-items: center; gap: 16px; height: 42px; padding-left: 5px; font-size: 26px; color: #1a1a1a; }
.tri { width: 22px; height: 14px; margin-top: 2px; background: #3c3c3c; clip-path: polygon(0 0, 100% 0, 50% 100%); }
.box {
  height: 154px;
  padding: 24px 24px 0;
  border: 2px solid #b8b8b8;
  border-radius: 10px;
  background: #e4e4e4;
}
.box.tall { height: auto; flex: 1; padding-top: 28px; border-bottom: 0; border-radius: 10px 10px 0 0; }
.slider { appearance: none; display: block; width: 100%; height: 34px; margin: 2px 0 0; background: none; }
.slider::-webkit-slider-runnable-track { height: 6px; border-radius: 3px; background: #b1b1b1; }
.slider::-webkit-slider-thumb {
  appearance: none;
  width: 34px;
  height: 34px;
  margin: -12px 0 0 4px;
  border: 1px solid #bdbdbd;
  border-radius: 50%;
  background: #fff;
  box-shadow: 0 1px 1px rgba(0, 0, 0, .2);
}
.scale { display: flex; justify-content: space-between; padding-top: 22px; }
.nodata { display: flex; align-items: flex-end; height: 34px; padding-left: 4px; color: #8a8a8a; }
.nodata label { margin: 0 12px 1px 8px; }
.nodata span { margin-bottom: 1px; color: #3a3a3a; }
.extra { display: flex; gap: 16px; padding-top: 26px; }
.extra label { padding-top: 3px; }
.extra input { flex: 1; min-width: 0; height: 42px; border: 4px solid #eaeaea; background: #fff; font: inherit; outline: 0; }
.band { display: flex; gap: 20px; padding-right: 78px; }
.band label { padding-top: 1px; }
.combo { position: relative; flex: 1; }
.combo select {
  appearance: none;
  display: block;
  width: 100%;
  height: 42px;
  border: 2px solid #bfbfbf;
  border-bottom-color: #a2a2a2;
  border-radius: 8px;
  background: #fff;
  font: inherit;
}
.cap { position: absolute; top: 0; right: 0; width: 34px; height: 42px; border-radius: 0 8px 8px 0; background: linear-gradient(#6fb0f6, #2a70f5); pointer-events: none; }
.caption { padding: 21px 0 19px; }
.list-row { display: flex; align-items: flex-start; gap: 20px; }
.pixels { flex: 1; table-layout: fixed; border-collapse: separate; border-spacing: 0; border: 2px solid #b0b0b0; border-top-color: #8c8c8c; border-bottom: 0; background: #fff; }
.pixels th { height: 42px; padding: 0 0 2px; font-weight: 400; background: linear-gradient(#ddd, #ddd) right center / 2px 32px no-repeat #f6f6f6; border-bottom: 2px solid #ccc; }
.pixels th:last-child { background: #f6f6f6; }
.pixels td { height: 18px; padding: 0; }
.w-red { width: 66px; }
.w-green { width: 92px; }
.w-blue { width: 74px; }
.add { flex: none; display: grid; justify-items: center; align-items: start; width: 52px; height: 50px; margin-top: 12px; padding-top: 10px; border: 2px solid #b0b0b0; border-bottom: 0; background: linear-gradient(#e6e6e6, #fafafa); }
.add svg { width: 30px; height: 28px; }
```
